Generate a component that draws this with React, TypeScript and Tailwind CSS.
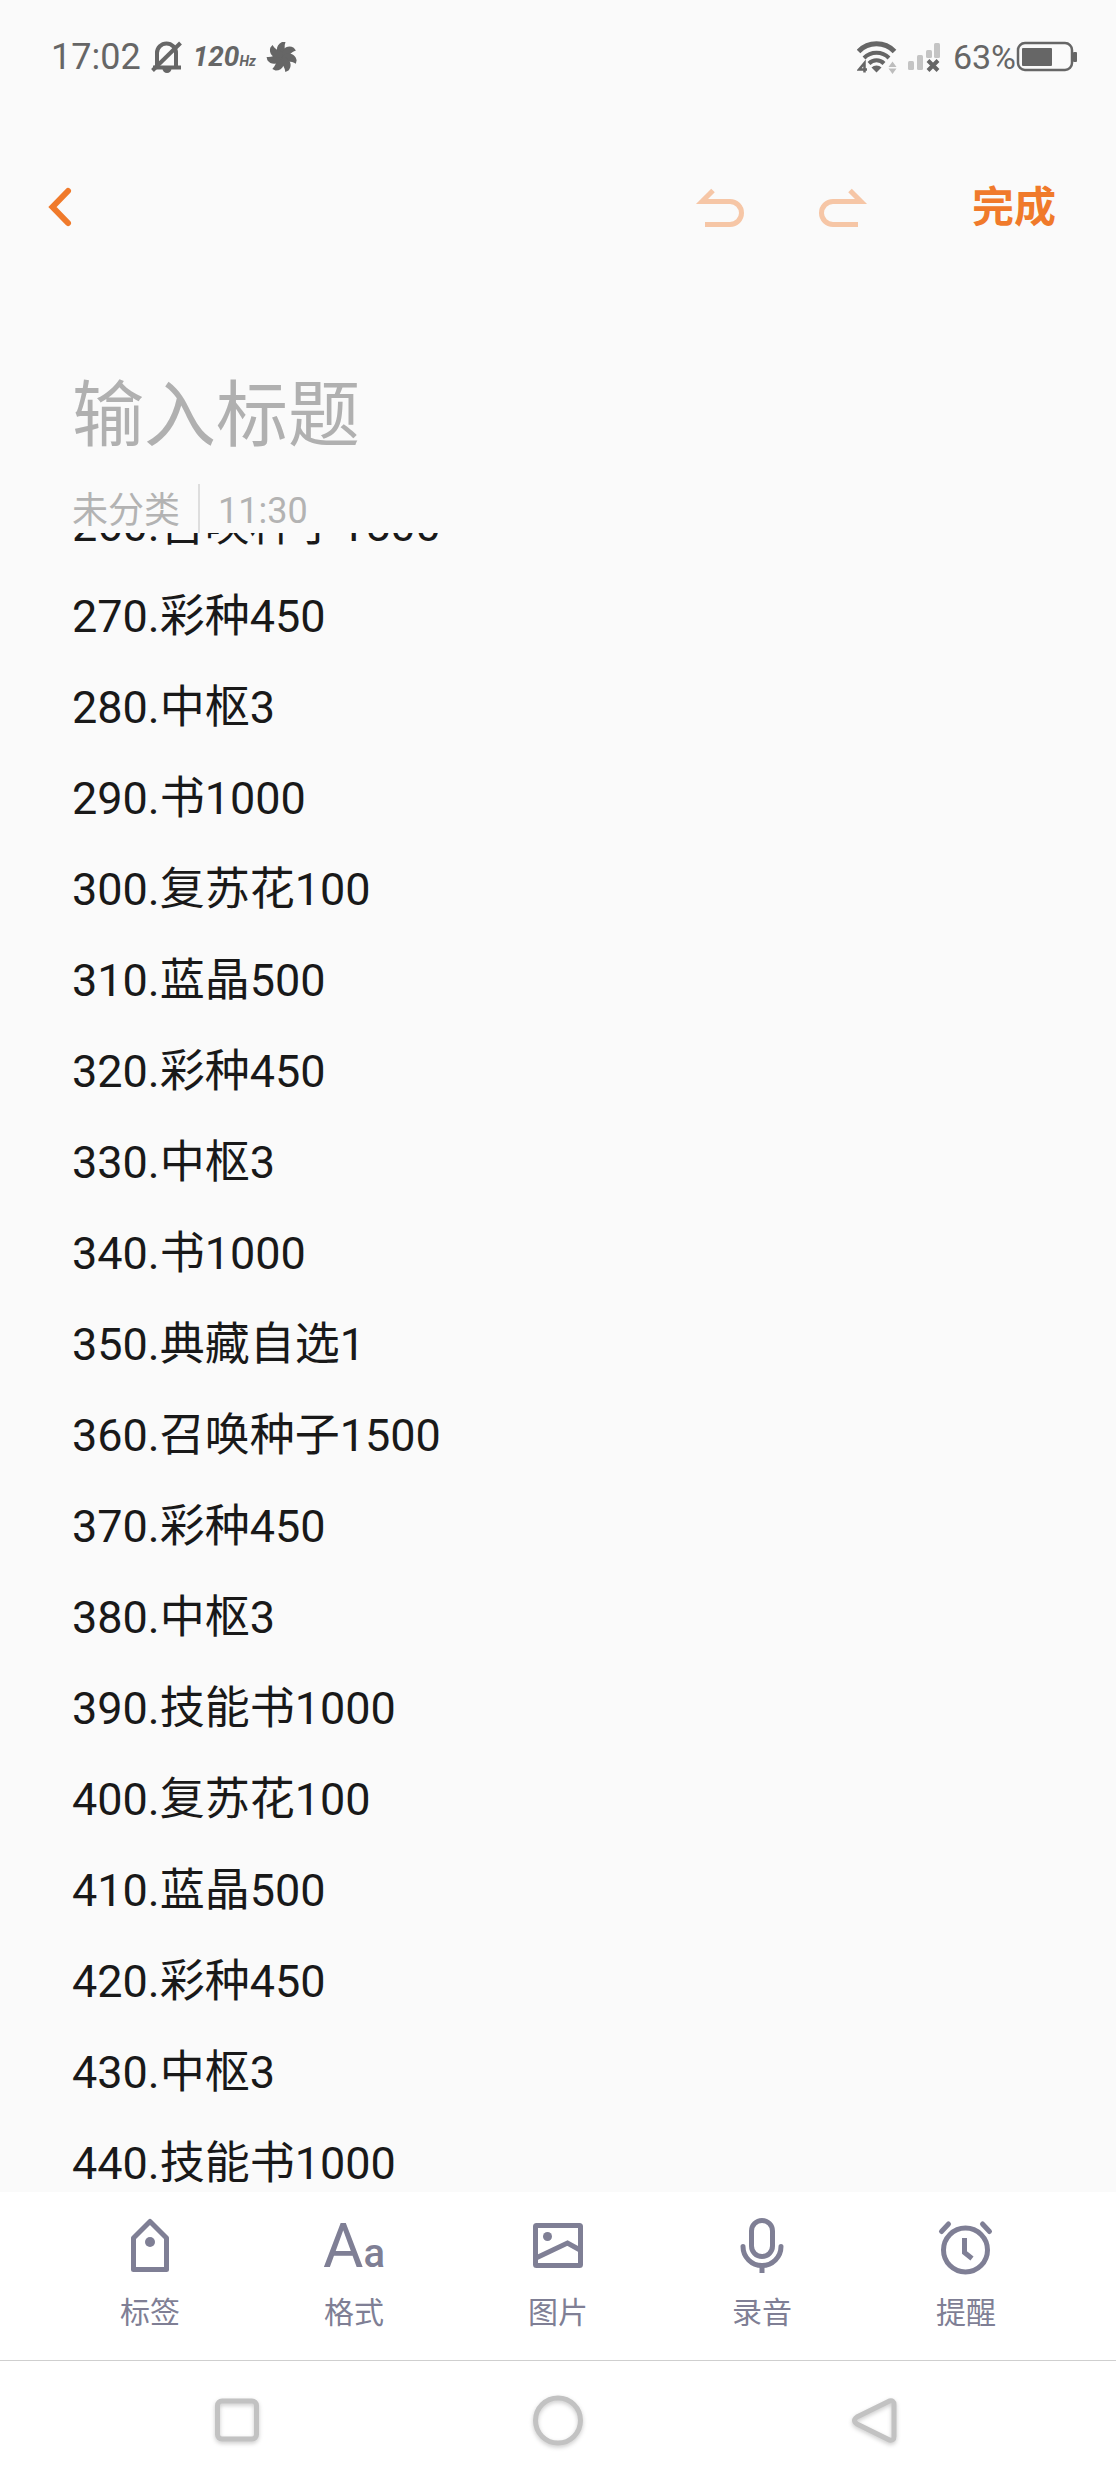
import { useLayoutEffect, useRef, type ReactNode } from "react"

const NOTE_TEXT = [
  "260.召唤种子1500",
  "270.彩种450",
  "280.中枢3",
  "290.书1000",
  "300.复苏花100",
  "310.蓝晶500",
  "320.彩种450",
  "330.中枢3",
  "340.书1000",
  "350.典藏自选1",
  "360.召唤种子1500",
  "370.彩种450",
  "380.中枢3",
  "390.技能书1000",
  "400.复苏花100",
  "410.蓝晶500",
  "420.彩种450",
  "430.中枢3",
  "440.技能书1000",
].join("\n")

const INITIAL_SCROLL = 53

const FAN_BLADES = 7

const BellOffIcon = () => (
  <svg viewBox="0 0 32 34" className="h-[34px] w-8" fill="none" stroke="currentColor" strokeWidth="4" aria-hidden="true">
    <path d="M6 26V13a9.500 9.500 0 0 1 19 0v14M2 27.500h28" />
    <path d="M1.500 30.500L29.500 3" />
    <path d="M11.500 28.500a4.500 4.500 0 0 0 9 0z" fill="currentColor" stroke="none" />
  </svg>
)

const FanIcon = () => (
  <svg viewBox="-16 -16 32 32" className="size-8" fill="currentColor" aria-hidden="true">
    <circle r="5" />
    {Array.from({ length: FAN_BLADES }, (_, i) => (
      <path key={i} d="M0 0C-6.500 -3 -7 -12 0 -15H3.500C2 -11 2.500 -7 4.500 -3z" transform={`rotate(${(i * 360) / FAN_BLADES})`} />
    ))}
  </svg>
)

const WifiIcon = () => (
  <svg viewBox="0 0 40 34" className="h-[34px] w-10" fill="none" stroke="currentColor" strokeWidth="4" aria-hidden="true">
    <path d="M1.500 11.500a25 25 0 0 1 36 0" strokeWidth="5" />
    <path d="M7 18a17.500 17.500 0 0 1 25 0" />
    <path d="M12 23.500a10.500 10.500 0 0 1 15 0" />
    <path d="M14.500 27.500a7 7 0 0 1 10 0l-5 5z" fill="currentColor" stroke="none" />
    <path d="M7.500 32.500V23L2 29.500h8" strokeWidth="2.500" />
    <path d="M35.500 21.500l4 5.500h-8zM35.500 34l4-5.500h-8z" fill="#bdbdbd" stroke="none" />
  </svg>
)

const SignalIcon = () => (
  <svg viewBox="0 0 34 30" className="h-[30px] w-[34px]" aria-hidden="true">
    <g fill="#c4c4c4">
      <rect x="1" y="19" width="6" height="9" rx="1.500" />
      <rect x="10" y="13" width="6" height="15" rx="1.500" />
      <rect x="19" y="8" width="6" height="8" rx="1.500" />
      <rect x="27" y="1" width="6" height="15" rx="1.500" />
    </g>
    <path d="M21 18.500l10 10M31 18.500l-10 10" stroke="currentColor" strokeWidth="4" />
  </svg>
)

const BatteryIcon = () => (
  <svg viewBox="0 0 61 32" className="h-8 w-[61px]" aria-hidden="true">
    <rect x="2" y="2" width="54" height="27" rx="7" fill="none" stroke="currentColor" strokeWidth="2.500" />
    <rect x="6" y="7" width="30" height="18" rx="1" fill="currentColor" />
    <rect x="57" y="11" width="4" height="10" rx="1" fill="currentColor" />
  </svg>
)

const StatusBar = () => (
  <div className="flex h-[114px] shrink-0 items-center justify-between pr-[39px] pl-[51px] text-[#666]">
    <div className="flex items-center">
      <time className="text-[36px]">17:02</time>
      <div className="ml-2.5 flex items-center gap-2.5">
        <BellOffIcon />
        <span className="flex items-baseline font-bold italic">
          <span className="text-[28px]">120</span>
          <span className="text-[14px]">Hz</span>
        </span>
        <FanIcon />
      </div>
    </div>
    <div className="flex items-center">
      <WifiIcon />
      <span className="ml-2.5">
        <SignalIcon />
      </span>
      <span className="ml-3 text-[34px]">63%</span>
      <BatteryIcon />
    </div>
  </div>
)

const ReturnArrow = ({ flipped = false }: { flipped?: boolean }) => (
  <svg viewBox="0 0 52 52" className="size-[52px]" fill="none" stroke="currentColor" strokeWidth="5" aria-hidden="true">
    <path d="M19 9.500L8 20.500H36a11.500 11.500 0 0 1 0 23H11" transform={flipped ? "matrix(-1 0 0 1 52 0)" : undefined} />
  </svg>
)

const EditorHeader = () => (
  <header className="flex h-[186px] shrink-0 items-center justify-between pr-[60px] pl-11">
    <button type="button" aria-label="返回" className="text-[#f07a2b]">
      <svg viewBox="0 0 32 44" className="h-11 w-8" fill="none" stroke="currentColor" strokeWidth="6" strokeLinecap="round" aria-hidden="true">
        <path d="M24 6L8.500 22L24 38" />
      </svg>
    </button>
    <div className="flex items-center">
      <div className="flex gap-[71px] text-[#f6c6a6]">
        <button type="button" aria-label="撤销">
          <ReturnArrow />
        </button>
        <button type="button" aria-label="重做">
          <ReturnArrow flipped />
        </button>
      </div>
      <button type="button" className="ml-[103px] text-[42px] font-bold text-[#f07a2b]">
        完成
      </button>
    </div>
  </header>
)

const NoteBody = () => {
  const ref = useRef<HTMLTextAreaElement>(null)

  useLayoutEffect(() => {
    if (ref.current !== null) ref.current.scrollTop = INITIAL_SCROLL
  }, [])

  return (
    <textarea
      ref={ref}
      aria-label="笔记内容"
      spellCheck={false}
      defaultValue={NOTE_TEXT}
      className="block min-h-0 w-full flex-1 resize-none px-[72px] text-[45px] leading-[91px] text-[#191919] outline-none [scrollbar-width:none]"
    />
  )
}

interface ToolProps {
  label: string
  children: ReactNode
}

const Tool = ({ label, children }: ToolProps) => (
  <button type="button" className="flex flex-col items-center gap-[17px] pt-6 pb-[27px]">
    {children}
    <span className="text-[30px] leading-10">{label}</span>
  </button>
)

const ToolIcon = ({ children }: { children: ReactNode }) => (
  <svg viewBox="0 0 60 60" className="size-[60px]" fill="none" stroke="currentColor" strokeWidth="5" aria-hidden="true">
    {children}
  </svg>
)

const Toolbar = () => (
  <div className="grid shrink-0 grid-cols-5 bg-white px-12 text-[#7f7f95]">
    <Tool label="标签">
      <ToolIcon>
        <path d="M30 5.500L46.500 22V53.500H13.500V22z" strokeLinejoin="round" />
        <circle cx="30" cy="26" r="5" fill="currentColor" stroke="none" />
      </ToolIcon>
    </Tool>
    <Tool label="格式">
      <span className="flex h-[60px] items-baseline leading-[60px]" aria-hidden="true">
        <span className="text-[62px]">A</span>
        <span className="text-[40px] font-medium">a</span>
      </span>
    </Tool>
    <Tool label="图片">
      <ToolIcon>
        <rect x="7.500" y="9.500" width="45" height="40" rx="1" />
        <circle cx="19.500" cy="20.500" r="4.500" fill="currentColor" stroke="none" />
        <path d="M8 42L39.500 27L52 34" />
      </ToolIcon>
    </Tool>
    <Tool label="录音">
      <ToolIcon>
        <rect x="19.500" y="4.500" width="21" height="36" rx="10.500" />
        <path d="M11 30.500a19 19 0 0 0 38 0" strokeLinecap="round" />
        <path d="M30 49v8" />
      </ToolIcon>
    </Tool>
    <Tool label="提醒">
      <ToolIcon>
        <circle cx="29.500" cy="34" r="22" />
        <path d="M28.500 22v14.500L36 42.500" />
        <path d="M5.500 15.500L12.500 8M46.500 8L53.500 15.500" strokeLinecap="round" />
      </ToolIcon>
    </Tool>
  </div>
)

const NavIcon = ({ children }: { children: ReactNode }) => (
  <svg viewBox="0 0 60 60" className="size-[60px] drop-shadow-[0_2px_2px_rgba(0,0,0,0.2)]" fill="none" stroke="#c2c2c2" strokeWidth="5" aria-hidden="true">
    {children}
  </svg>
)

const SystemNav = () => (
  <nav className="grid h-[120px] shrink-0 grid-cols-3 items-center justify-items-center border-t border-[#cfcfcf] bg-white px-20">
    <button type="button" aria-label="最近任务">
      <NavIcon>
        <rect x="8.500" y="10" width="39" height="38" rx="4.500" />
      </NavIcon>
    </button>
    <button type="button" aria-label="主屏幕">
      <NavIcon>
        <circle cx="30" cy="29.500" r="22.500" />
      </NavIcon>
    </button>
    <button type="button" aria-label="返回上一页">
      <NavIcon>
        <path d="M42.500 10L10 26q-5 3.500 0 7L42.500 49q4.500 1 4.500-3.500v-32q0-4.500-4.500-3.500z" />
      </NavIcon>
    </button>
  </nav>
)

const App = () => (
  <div className="flex h-screen flex-col bg-[#fafafa] font-['Roboto','Noto_Sans_CJK_SC',sans-serif]" lang="zh-CN">
    <StatusBar />
    <EditorHeader />
    <main className="flex min-h-0 flex-1 flex-col pt-[59px]">
      <input
        type="text"
        aria-label="标题"
        placeholder="输入标题"
        className="h-28 w-full shrink-0 px-[72px] text-[72px] outline-none placeholder:text-[#b0b0b0]"
      />
      <div className="mt-[13px] flex shrink-0 items-end gap-[18px] px-[72px] text-[36px] leading-[43px] text-[#b3b3b3]">
        <button type="button">未分类</button>
        <span className="h-[49px] w-0.5 bg-[#dedede]" />
        <time>11:30</time>
      </div>
      <NoteBody />
    </main>
    <Toolbar />
    <SystemNav />
  </div>
)

export default App
